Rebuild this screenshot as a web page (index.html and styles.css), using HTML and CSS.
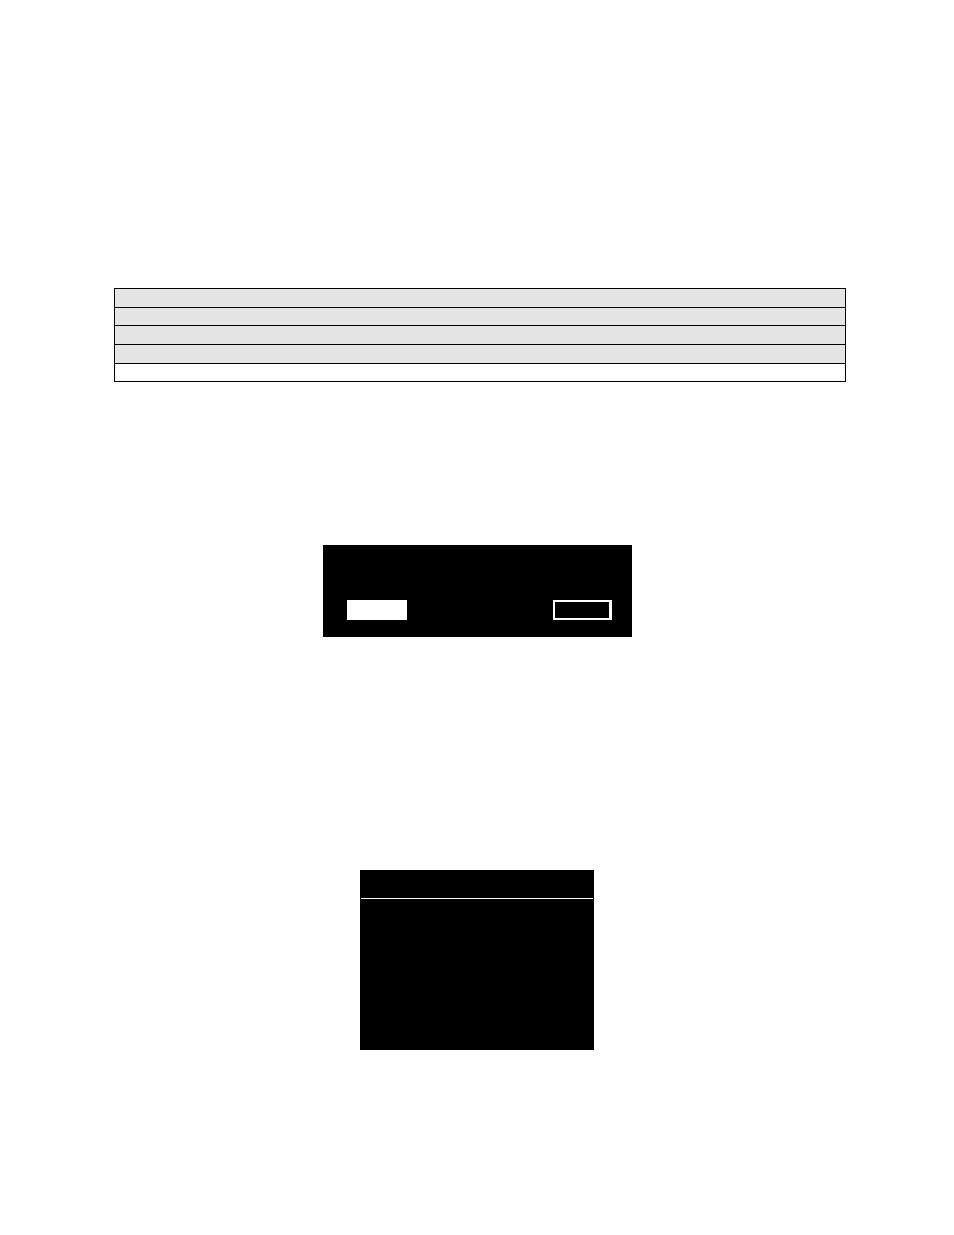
FILE: index.html
```html
<!DOCTYPE html>
<html lang="en">
<head>
<meta charset="utf-8">
<meta name="viewport" content="width=device-width, initial-scale=1">
<link rel="stylesheet" href="styles.css">
</head>
<body>
<main class="page">
  <section class="listing">
    <table class="grid">
      <tbody>
        <tr class="row shaded tall"><td></td></tr>
        <tr class="row shaded"><td></td></tr>
        <tr class="row shaded tall"><td></td></tr>
        <tr class="row shaded tall"><td></td></tr>
        <tr class="row"><td></td></tr>
      </tbody>
    </table>
  </section>
  <section class="dialog">
    <button type="button" class="choice choice-selected"></button>
    <button type="button" class="choice choice-outline"></button>
  </section>
  <section class="panel">
    <header class="panel-header"></header>
  </section>
</main>
</body>
</html>
```
FILE: styles.css
```css
* {
  box-sizing: border-box;
}

body {
  margin: 0;
  background: #fff;
  color: #000;
  font-family: "Liberation Sans", Arial, sans-serif;
}

.page {
  display: flex;
  flex-direction: column;
  align-items: center;
  min-height: 100vh;
  padding: 288px 0 184px;
}

.listing {
  width: 100%;
  padding: 0 108px 0 114px;
}

.grid {
  width: 100%;
  border-collapse: separate;
  border-spacing: 0;
}

.row td {
  height: 18px;
  padding: 0;
  border: solid #000;
  border-width: 0 1px 1px;
}

.row.tall td {
  height: 19px;
}

.row:first-child td {
  height: 20px;
  border-top-width: 1px;
}

.shaded td {
  background: #e4e4e4;
}

.dialog {
  display: flex;
  align-items: flex-end;
  justify-content: space-between;
  width: 309px;
  min-height: 92px;
  margin-top: 163px;
  padding: 0 20px 17px 24px;
  background: #000;
}

.choice {
  width: 60px;
  height: 20px;
  padding: 0;
  border: 2px solid #fff;
  border-radius: 0;
}

.choice-selected {
  background: #fff;
}

.choice-outline {
  width: 59px;
  border-right-width: 3px;
  background: #000;
}

.panel {
  width: 234px;
  min-height: 180px;
  margin-top: 233px;
  padding: 0 1px;
  background: #000;
}

.panel-header {
  height: 29px;
  border-bottom: 1px solid #fff;
}
```
